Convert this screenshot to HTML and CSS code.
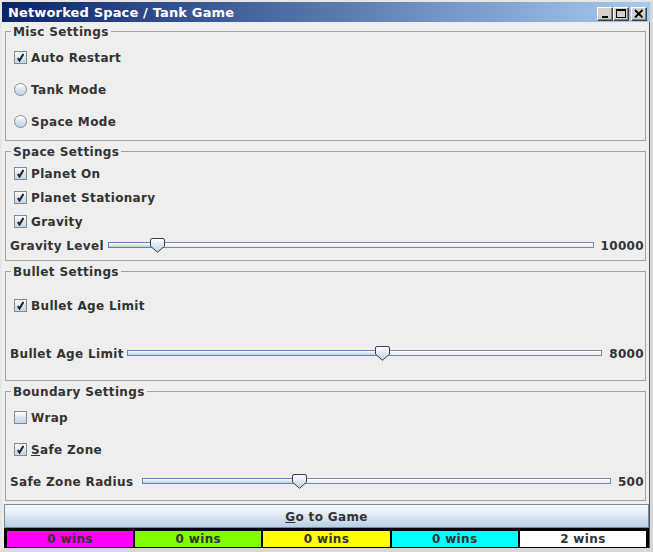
FILE: index.html
```html
<!DOCTYPE html>
<html>
<head>
<meta charset="utf-8">
<link rel="stylesheet" href="styles.css">
</head>
<body>
<div class="window">
  <div class="titlebar">
    <span class="title">Networked Space / Tank Game</span>
    <div class="tb-buttons">
      <div class="tb-btn"><svg width="14" height="12" viewBox="0 0 14 12"><rect x="4" y="8" width="6" height="2" fill="#000"/></svg></div>
      <div class="tb-btn"><svg width="14" height="12" viewBox="0 0 14 12"><rect x="2.5" y="1.5" width="9" height="8" fill="none" stroke="#000"/><rect x="2" y="1" width="10" height="2" fill="#000"/></svg></div>
      <div class="tb-btn tb-close"><svg width="14" height="12" viewBox="0 0 14 12"><path d="M3 2 L10.5 9.5 M10.5 2 L3 9.5" stroke="#000" stroke-width="1.8"/></svg></div>
    </div>
  </div>
  <div class="content">
    <div class="group first">
      <div class="legend">Misc Settings</div>
      <div class="rows">
        <div class="row r32"><span class="check on"></span><span class="txt">Auto Restart</span></div>
        <div class="row r32"><span class="radio"></span><span class="txt">Tank Mode</span></div>
        <div class="row r32"><span class="radio"></span><span class="txt">Space Mode</span></div>
      </div>
    </div>
    <div class="group">
      <div class="legend">Space Settings</div>
      <div class="rows">
        <div class="row r24"><span class="check on"></span><span class="txt">Planet On</span></div>
        <div class="row r24"><span class="check on"></span><span class="txt">Planet Stationary</span></div>
        <div class="row r24"><span class="check on"></span><span class="txt">Gravity</span></div>
        <div class="row r24">
          <span class="txt">Gravity Level</span>
          <div class="slider sl-gravity"><div class="track"><div class="fill" style="width:calc(8.6% + 7px)"></div></div><span class="thumb" style="left:8.6%"></span></div>
          <span class="txt">10000</span>
        </div>
      </div>
    </div>
    <div class="group">
      <div class="legend">Bullet Settings</div>
      <div class="rows">
        <div class="row r48"><span class="check on"></span><span class="txt">Bullet Age Limit</span></div>
        <div class="row r48">
          <span class="txt">Bullet Age Limit</span>
          <div class="slider sl-bullet"><div class="track"><div class="fill" style="width:calc(52.2% + 7px)"></div></div><span class="thumb" style="left:52.2%"></span></div>
          <span class="txt">8000</span>
        </div>
      </div>
    </div>
    <div class="group">
      <div class="legend">Boundary Settings</div>
      <div class="rows">
        <div class="row r32"><span class="check"></span><span class="txt">Wrap</span></div>
        <div class="row r32"><span class="check on"></span><span class="txt"><u>S</u>afe Zone</span></div>
        <div class="row r32">
          <span class="txt">Safe Zone Radius</span>
          <div class="slider sl-safe"><div class="track"><div class="fill" style="width:calc(32% + 7px)"></div></div><span class="thumb" style="left:32%"></span></div>
          <span class="txt">500</span>
        </div>
      </div>
    </div>
    <div class="gobtn"><span class="txt"><u>G</u>o to Game</span></div>
    <div class="scores">
      <div class="cell magenta">0 wins</div>
      <div class="cell green">0 wins</div>
      <div class="cell yellow">0 wins</div>
      <div class="cell cyan">0 wins</div>
      <div class="cell white">2 wins</div>
    </div>
  </div>
</div>
</body>
</html>
```
FILE: styles.css
```css
html, body {
  margin: 0;
  padding: 0;
  background: #eeeeee;
}
body {
  font-family: "DejaVu Sans", "Liberation Sans", sans-serif;
  font-weight: bold;
  font-size: 12px;
  letter-spacing: 0.35px;
  color: #333333;
}
.window {
  width: 653px;
  height: 552px;
  box-sizing: border-box;
  border-top: 2px solid #e6e6e6;
  border-left: 2px solid #e6e6e6;
  border-right: 3px solid #d8d8d8;
  border-bottom: 4px solid #d8d8d8;
  box-shadow: inset -1px 0 0 #555;
  background: #eeeeee;
  overflow: hidden;
}
.titlebar {
  height: 20px;
  display: flex;
  align-items: center;
  justify-content: space-between;
  background: linear-gradient(to right, #0a246a, #a6caf0);
  padding: 0 3px 0 6px;
}
.title {
  color: #ffffff;
  font-size: 13px;
  letter-spacing: 0.15px;
  line-height: 16px;
  padding-top: 2px;
}
.tb-buttons {
  display: flex;
  padding-top: 3px;
}
.tb-btn {
  width: 16px;
  height: 14px;
  box-sizing: border-box;
  background: #d4d0c8;
  border-top: 1px solid #ffffff;
  border-left: 1px solid #ffffff;
  border-right: 1px solid #404040;
  border-bottom: 1px solid #404040;
  box-shadow: inset -1px -1px 0 #808080;
  display: flex;
  align-items: center;
  justify-content: center;
}
.tb-close {
  margin-left: 2px;
}
.content {
  display: flex;
  flex-direction: column;
}
.group {
  height: 110px;
  box-sizing: border-box;
  border: 1px solid #a3a3a3;
  margin: 10px 4px 0 3px;
  padding: 0 1px 3px 4px;
}
.group.first {
  margin-top: 9px;
}
.legend {
  margin: -9px 0 2px 1px;
  padding: 1px 2px 0 2px;
  height: 16px;
  box-sizing: border-box;
  line-height: 16px;
  width: fit-content;
  background: #eeeeee;
}
.rows {
  display: flex;
  flex-direction: column;
}
.row {
  display: flex;
  align-items: center;
}
.txt {
  flex: none;
  line-height: 15px;
  padding-top: 2px;
}
.r32 { height: 32px; }
.r24 { height: 24px; }
.r48 { height: 48px; }
.check, .radio {
  width: 13px;
  height: 13px;
  box-sizing: border-box;
  margin: 0 4px 0 4px;
  border: 1px solid #7a8a99;
  background: linear-gradient(to bottom, #ffffff, #d4e1ee 60%, #c5d6e8);
  position: relative;
  flex: none;
}
.radio {
  border-radius: 50%;
  border-color: #808a96;
}
.check.on::after {
  content: "";
  position: absolute;
  left: 2px;
  top: 1px;
  width: 7px;
  height: 9px;
  background: no-repeat center/contain url("data:image/svg+xml;utf8,<svg xmlns='http://www.w3.org/2000/svg' width='7' height='9' viewBox='0 0 7 9'><path d='M0.8 5 L2.5 7.6 L6.4 1' fill='none' stroke='%23222' stroke-width='2'/></svg>");
}
.slider {
  flex: 1;
  position: relative;
  height: 15px;
  margin: 0 7px 0 6px;
}
.sl-gravity { margin-left: 4px; }
.sl-bullet { margin-left: 3px; }
.sl-safe { margin-left: 9px; }
.track {
  margin-top: 4px;
  height: 6px;
  box-sizing: border-box;
  border: 1px solid #7a8a99;
  background: linear-gradient(to bottom, #ffffff, #e4e9ef);
  position: relative;
}
.fill {
  position: absolute;
  left: -1px;
  top: -1px;
  height: 6px;
  box-sizing: border-box;
  border: 1px solid #6382bf;
  background: linear-gradient(to bottom, #ffffff, #b8cfe5);
}
.thumb {
  position: absolute;
  top: 0;
  width: 15px;
  height: 15px;
  background: no-repeat url("data:image/svg+xml;utf8,<svg xmlns='http://www.w3.org/2000/svg' width='15' height='15' viewBox='0 0 15 15'><defs><linearGradient id='g' x1='0' y1='0' x2='0' y2='1'><stop offset='0' stop-color='%23ffffff'/><stop offset='1' stop-color='%23b8cfe5'/></linearGradient></defs><path d='M2 0.5 H13 Q14.5 0.5 14.5 2 V8.2 L7.5 14.3 L0.5 8.2 V2 Q0.5 0.5 2 0.5 Z' fill='url(%23g)' stroke='%23404040'/></svg>");
}
.gobtn {
  margin: 3px 1px 0 2px;
  height: 24px;
  box-sizing: border-box;
  border: 1px solid #7a8a99;
  background: linear-gradient(to bottom, #f7f9fc 0%, #e6eef6 35%, #b8cfe5 100%);
  display: flex;
  align-items: center;
  justify-content: center;
}
.scores {
  margin: 0 1px 0 2px;
  height: 20px;
  box-sizing: border-box;
  background: #000000;
  padding: 3px 3px 2px 3px;
  display: grid;
  grid-template-columns: repeat(5, 1fr);
  gap: 2px;
}
.cell {
  display: flex;
  align-items: center;
  justify-content: center;
  line-height: 15px;
  padding-top: 1px;
}
.magenta { background: #ff00ff; }
.green { background: #80ff00; }
.yellow { background: #ffff00; }
.cyan { background: #00ffff; }
.white { background: #ffffff; }
```
